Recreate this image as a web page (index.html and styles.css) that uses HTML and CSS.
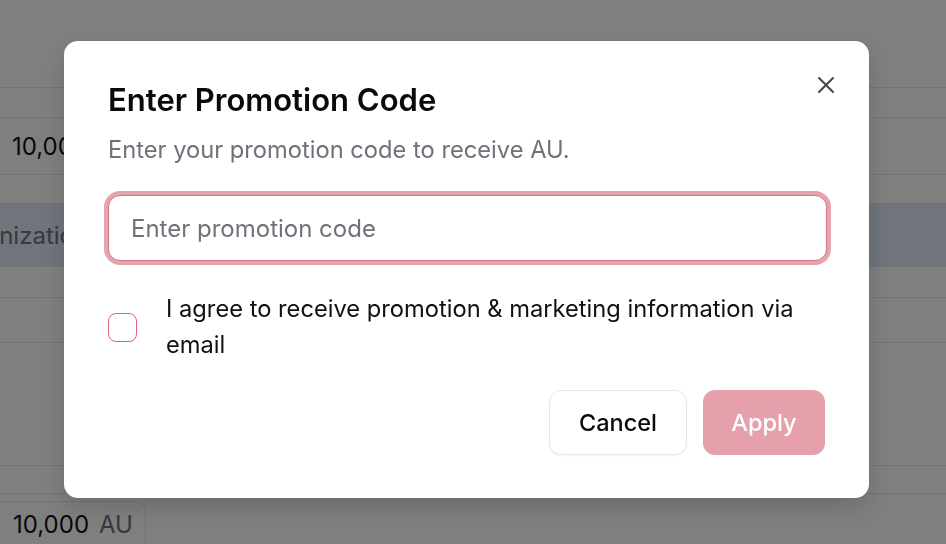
FILE: index.html
```html
<!DOCTYPE html>
<html lang="en">
<head>
<meta charset="UTF-8">
<meta name="viewport" content="width=device-width, initial-scale=1.0">
<title>Enter Promotion Code</title>
<link rel="stylesheet" href="styles.css">
</head>
<body>
<div class="page">
<div class="page-header"></div>
<div class="row row-thin"></div>
<div class="row row-amount"><span class="amount">10,000</span></div>
<div class="row-gap"></div>
<div class="row-active"><span class="org">Organization</span></div>
<div class="row row-a"></div>
<div class="row row-b"></div>
<div class="row row-c"></div>
<div class="row row-d"></div>
<div class="amount-box"><span class="amount">10,000</span><span class="unit">AU</span></div>
</div>

<div class="overlay"></div>

<div class="dialog" role="dialog">
<button class="dialog-close" aria-label="Close">
<svg width="18" height="18" viewBox="0 0 18 18" fill="none" stroke="currentColor" stroke-width="2" stroke-linecap="round">
<path d="M2 2 L16 16 M16 2 L2 16"/>
</svg>
</button>
<h2 class="dialog-title">Enter Promotion Code</h2>
<p class="dialog-desc">Enter your promotion code to receive AU.</p>
<input class="code-input" type="text" placeholder="Enter promotion code">
<label class="agree">
<span class="checkbox"></span>
<span class="agree-text">I agree to receive promotion &amp; marketing information via email</span>
</label>
<div class="dialog-actions">
<button class="btn btn-cancel">Cancel</button>
<button class="btn btn-apply" disabled>Apply</button>
</div>
</div>
</body>
</html>
```
FILE: styles.css
```css
* {
    box-sizing: border-box;
}
body {
    margin: 0;
    font-family: Inter, 'Noto Sans', sans-serif;
    background-color: #fff;
    color: #111;
    overflow: hidden;
}
.page {
    height: 544px;
}
.page-header {
    height: 88px;
    border-bottom: 1px solid #e6e6e6;
}
.row {
    border-bottom: 1px solid #e6e6e6;
}
.row-thin {
    height: 30px;
}
.row-amount {
    height: 57px;
    display: flex;
    align-items: center;
    padding-left: 12px;
    font-size: 24px;
}
.row-gap {
    height: 28px;
}
.row-active {
    height: 64px;
    background-color: #e0eaf8;
    display: flex;
    align-items: center;
    font-size: 24px;
    color: #6b7280;
}
.org {
    margin-left: -56px;
}
.row-a {
    height: 31px;
}
.row-b {
    height: 45px;
}
.row-c {
    height: 123px;
}
.row-d {
    height: 28px;
}
.amount-box {
    margin-top: 7px;
    margin-left: -10px;
    width: 156px;
    height: 46px;
    border: 1px solid #e6e6e6;
    border-bottom: none;
    border-radius: 10px 10px 0 0;
    display: flex;
    align-items: center;
    gap: 10px;
    padding-left: 22px;
    font-size: 24px;
}
.amount {
    color: #111;
}
.unit {
    color: #6b7280;
}
.overlay {
    position: fixed;
    inset: 0;
    background-color: rgba(0, 0, 0, 0.5);
}
.dialog {
    position: fixed;
    left: 64px;
    top: 41px;
    width: 805px;
    height: 457px;
    background-color: #fff;
    border-radius: 14px;
    box-shadow: 0 10px 25px rgba(0, 0, 0, 0.15);
    padding: 41px 44px 43px;
    display: flex;
    flex-direction: column;
}
.dialog-close {
    position: absolute;
    top: 35px;
    right: 34px;
    width: 18px;
    height: 18px;
    padding: 0;
    border: none;
    background: none;
    color: #454545;
    cursor: pointer;
}
.dialog-close svg {
    display: block;
}
.dialog-title {
    margin: 0;
    font-size: 31px;
    line-height: 36px;
    font-weight: 600;
    color: #0a0a0a;
}
.dialog-desc {
    margin: 16px 0 0;
    font-size: 23.7px;
    line-height: 32px;
    color: #71717a;
}
.code-input {
    margin-top: 29px;
    width: 719px;
    height: 66px;
    border: 1px solid #d07383;
    border-radius: 12px;
    box-shadow: 0 0 0 4px #e5a3ad;
    padding: 0 22px;
    font-family: inherit;
    font-size: 24px;
    color: #111;
    outline: none;
}
.code-input::placeholder {
    color: #71717a;
}
.agree {
    margin-top: 30px;
    display: flex;
    align-items: center;
    gap: 29px;
    cursor: pointer;
}
.checkbox {
    flex: none;
    width: 29px;
    height: 29px;
    border: 1.5px solid #d9677c;
    border-radius: 8px;
}
.agree-text {
    font-size: 23.7px;
    line-height: 36px;
    color: #111;
}
.dialog-actions {
    margin-top: auto;
    display: flex;
    justify-content: flex-end;
    gap: 16px;
}
.btn {
    height: 65px;
    padding: 0 29px;
    border-radius: 12px;
    font-family: inherit;
    font-size: 23.5px;
    font-weight: 500;
    cursor: pointer;
}
.btn-cancel {
    background-color: #fff;
    color: #0a0a0a;
    border: 1px solid #e8e8e8;
    box-shadow: 0 1px 2px rgba(0, 0, 0, 0.05);
}
.btn-apply {
    background-color: #e5a0ab;
    color: #fff;
    border: none;
    width: 122px;
    padding: 0;
}
```
